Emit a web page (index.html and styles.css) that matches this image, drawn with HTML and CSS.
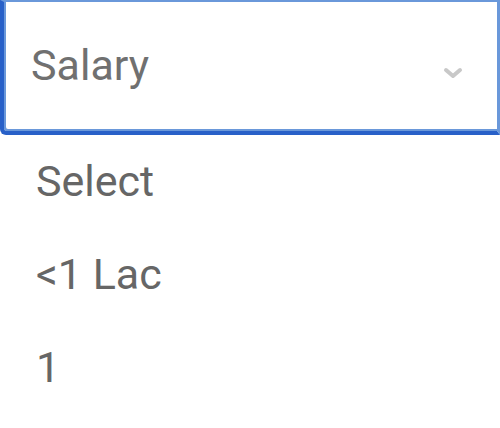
FILE: index.html
```html
<!DOCTYPE html>
<html>
<head>
<meta charset="utf-8">
<link rel="stylesheet" href="styles.css">
</head>
<body>
<div class="select">
  <span class="value">Salary</span>
  <svg class="chev" width="22" height="14" viewBox="0 0 22 14"><path d="M4 4 L11 10 L18 4" fill="none" stroke="#c8c8c8" stroke-width="4" stroke-linecap="round" stroke-linejoin="round"/></svg>
</div>
<ul class="options">
  <li>Select</li>
  <li>&lt;1 Lac</li>
  <li>1</li>
</ul>
</body>
</html>
```
FILE: styles.css
```css
html, body {
  margin: 0;
  padding: 0;
  background: #fff;
}
body {
  width: 500px;
  height: 428px;
  overflow: hidden;
  font-family: Roboto, "Liberation Sans", sans-serif;
}
.select {
  box-sizing: border-box;
  height: 135px;
  width: 500px;
  border-top: 2px solid #6a98da;
  border-right: 3px solid #6a98da;
  border-bottom: 4px solid #2860c8;
  border-left: 4px solid #2860c8;
  border-bottom-left-radius: 6px;
  box-shadow: inset 2px -2px 0 #6a98da;
  display: flex;
  align-items: center;
  justify-content: space-between;
  padding: 0 33px 0 27px;
}
.value {
  font-size: 43px;
  color: #707070;
  margin-top: -3px;
}
.chev {
  display: block;
  margin-top: 12px;
}
.options {
  list-style: none;
  margin: 0;
  padding: 0 0 0 36px;
}
.options li {
  font-size: 43px;
  color: #666;
  height: 93px;
  line-height: 93px;
}
```
